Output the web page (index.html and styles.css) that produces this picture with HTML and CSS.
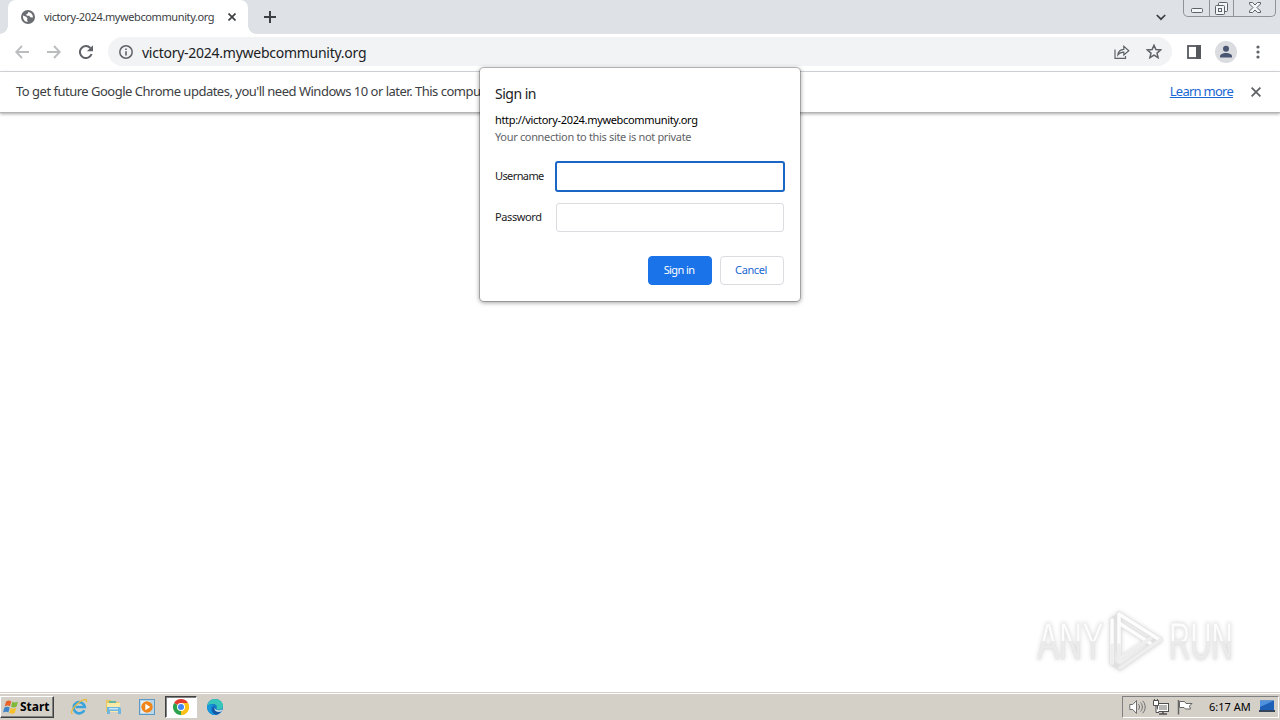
FILE: index.html
```html
<!DOCTYPE html>
<html lang="en">
<head>
    <meta charset="UTF-8">
    <title>victory-2024.mywebcommunity.org</title>
    <link rel="stylesheet" href="styles.css">
</head>
<body>
    <div class="tab-strip">
        <div class="tab">
            <svg class="globe" width="14" height="14" viewBox="0 0 14 14"><circle cx="7" cy="7" r="7" fill="#6a6d71"/><path d="M2 5.6l3.2 1.2 1.4 1.6-.6 1.2.8 2.4C3.800 12 1.700 9.500 2 5.600zM7.300 1.900l-.5 1.700-1.600.7.600 1.500 2.600-.1.800 1.600 2.700.2c.400-2.600-1.700-5.200-4.600-5.600z" fill="#fff"/></svg>
            <span class="tab-title">victory-2024.mywebcommunity.org</span>
            <svg class="tab-close" width="8" height="8" viewBox="0 0 8 8"><path d="M.5.5l7 7M7.500.5l-7 7" stroke="#3c4043" stroke-width="1.700"/></svg>
        </div>
        <svg class="new-tab" width="12" height="12" viewBox="0 0 12 12"><path d="M6 0v12M0 6h12" stroke="#3c4043" stroke-width="2"/></svg>
        <svg class="tab-search" width="10" height="7" viewBox="0 0 10 7"><path d="M.8 1L5 5.200 9.200 1" fill="none" stroke="#3c4043" stroke-width="1.700"/></svg>
        <div class="window-buttons">
            <span class="win-min"><svg width="12" height="5" viewBox="0 0 12 5"><rect x=".5" y=".5" width="11" height="4" rx="1" fill="#f4f5f7" stroke="#5d6168"/></svg></span>
            <span class="win-max"><svg width="13" height="13" viewBox="0 0 13 13" fill="#f4f5f7" stroke="#5d6168"><rect x="3.500" y=".5" width="9" height="9" rx="1"/><rect x=".5" y="3.500" width="9" height="9" rx="1"/><rect x="3.500" y="6.500" width="3" height="3"/></svg></span>
            <span class="win-close"><svg width="12" height="11" viewBox="0 0 12 11"><path d="M.5.500h3L6 3 8.500.5h3v1.500L8 5.500l3.500 3.500v1.500h-3L6 8l-2.500 2.500h-3V9L4 5.500.5 2z" fill="#f4f5f7" stroke="#5d6168"/></svg></span>
        </div>
    </div>

    <div class="toolbar">
        <svg class="back" width="14" height="14" viewBox="0 0 14 14" fill="none" stroke="#babcbe" stroke-width="1.800"><path d="M14 7H1.500M7 1L1.200 7 7 13"/></svg>
        <svg class="forward" width="14" height="14" viewBox="0 0 14 14" fill="none" stroke="#babcbe" stroke-width="1.800"><path d="M0 7h12.500M7 1l5.800 6L7 13"/></svg>
        <svg class="reload" width="14" height="14" viewBox="0 0 14 14"><path d="M12.600 9A6 6 0 1 1 11.400 3" fill="none" stroke="#5f6368" stroke-width="2"/><path d="M14 .2V6.300H7.900z" fill="#5f6368"/></svg>
        <div class="omnibox">
            <svg width="14" height="14" viewBox="0 0 14 14"><circle cx="7" cy="7" r="6.200" fill="none" stroke="#5f6368" stroke-width="1.500"/><path d="M7 6.200v4.300M7 3.500V5" stroke="#5f6368" stroke-width="1.600"/></svg>
            <span class="address">victory-2024.mywebcommunity.org</span>
            <svg class="share" width="16" height="14" viewBox="0 0 16 14" fill="none" stroke="#5f6368" stroke-width="1.200"><path d="M1 4.500v8.900h10.500V11"/><path d="M3.800 10c.4-3.700 2.200-5.400 6-5.600V1.300L14.800 5.700 9.800 10V7.200c-2.700 0-4.500.8-6 2.800z"/></svg>
            <svg class="star" width="16" height="15" viewBox="0 0 16 15"><path d="M8 1.300l1.900 4.300 4.700.4-3.600 3.100 1.100 4.600L8 11.200l-4.100 2.500L5 9.100 1.400 6l4.700-.4z" fill="none" stroke="#5f6368" stroke-width="1.500"/></svg>
        </div>
        <svg class="side-panel" width="14" height="14" viewBox="0 0 14 14"><rect x="1" y="1" width="12" height="12" fill="none" stroke="#55585d" stroke-width="1.800"/><path d="M9 0h5v14H9z" fill="#55585d"/></svg>
        <svg class="profile" width="22" height="22" viewBox="0 0 22 22"><circle cx="11" cy="11" r="11" fill="#dadce0"/><circle cx="11" cy="7.800" r="3" fill="#4a5572"/><path d="M5 16.500v-1.200c0-2 3-3.300 6-3.300s6 1.300 6 3.300v1.200z" fill="#4a5572"/></svg>
        <svg class="menu" width="4" height="14" viewBox="0 0 4 14" fill="#5f6368"><circle cx="2" cy="2" r="1.600"/><circle cx="2" cy="7" r="1.600"/><circle cx="2" cy="12" r="1.600"/></svg>
    </div>

    <div class="infobar">
        <span class="infobar-text">To get future Google Chrome updates, you'll need Windows 10 or later. This compu</span>
        <a class="learn-more" href="#">Learn more</a>
        <svg width="10" height="10" viewBox="0 0 10 10"><path d="M.6.6l8.800 8.800M9.400.6L.6 9.400" stroke="#5f6368" stroke-width="1.800"/></svg>
    </div>

    <div class="page">
        <div class="watermark">
            <span class="wm-any">ANY</span>
            <svg width="58" height="62" viewBox="0 0 58 62" fill="none" stroke-linejoin="round" stroke-linecap="round">
                <g stroke="#e0e0e0" stroke-width="5"><path d="M5 10v43M12 4v37M12 4l41 26M53 30L13 58M5 10l5-3M5 53l8 5M12 13l31 20"/></g>
                <g stroke="#fdfdfd" stroke-width="3.500"><path d="M5 10v43M12 4v37M12 4l41 26M12 13l31 20"/></g>
                <g stroke="#eee" stroke-width="3.500"><path d="M5 35v18M12 35v14l32-21M53 30L13 58"/></g>
            </svg>
            <span class="wm-run">RUN</span>
        </div>
    </div>

    <form class="dialog">
        <h1>Sign in</h1>
        <p class="origin">http://victory-2024.mywebcommunity.org</p>
        <p class="warning">Your connection to this site is not private</p>
        <div class="field">
            <label for="username">Username</label>
            <input class="focused" type="text" id="username">
        </div>
        <div class="field">
            <label class="pw" for="password">Password</label>
            <input type="password" id="password">
        </div>
        <div class="actions">
            <button type="button" class="primary">Sign in</button>
            <button type="button">Cancel</button>
        </div>
    </form>

    <div class="taskbar">
        <div class="start">
            <svg width="17" height="16" viewBox="0 0 17 16"><path d="M3 2.500c2-1.300 3.700-1.200 5.300-.2L7 7.300c-1.700-1-3.300-1-5.300.2z" fill="#e8622c"/><path d="M9.300 2.800c1.800 1 3.600 1 5.700-.2l-1.400 5c-2 1.200-3.800 1.200-5.600.2z" fill="#7fb83a"/><path d="M1.400 8.600c2-1.200 3.700-1.200 5.300-.2l-1.300 5c-1.700-1-3.400-1-5.400.2z" fill="#3f86c9"/><path d="M7.700 9c1.800 1 3.600 1 5.600-.2l-1.400 5c-2 1.200-3.800 1.200-5.600.2z" fill="#f6bf2b"/></svg>
            <span>Start</span>
        </div>
        <div class="launchers">
            <span class="launcher"><svg width="18" height="18" viewBox="0 0 18 18" fill="none"><path d="M14.300 12.200A5.600 5.600 0 1 1 14.800 9H5.500" stroke="#3ba3dc" stroke-width="2.600"/><path d="M2.500 16C-.5 15 4 8 9.500 4 14 .8 17.800.5 16.300 4.200" stroke="#e9b93c" stroke-width="1.300"/></svg></span>
            <span class="launcher"><svg width="17" height="17" viewBox="0 0 17 17"><path d="M1 2h5l1 2h7v10H1z" fill="#e7c65e"/><path d="M2 5h13v9H2z" fill="#f8e9a6"/><path d="M4 3h7v2H4z" fill="#66b7a0"/><path d="M2 9h13l1 2v5h-3v-3H5v3H2z" fill="#6cb6df"/><path d="M4 10h9v1.500H4z" fill="#c5e6f7"/></svg></span>
            <span class="launcher"><svg width="16" height="16" viewBox="0 0 16 16"><rect x=".5" y=".5" width="15" height="15" fill="#b9d5ea" stroke="#5e98c4"/><path d="M2 2h9v12H2z" fill="#e4f0f8"/><circle cx="8" cy="8" r="5.700" fill="#f08519"/><path d="M6.300 4.800v6.400L11.300 8z" fill="#fff"/></svg></span>
            <span class="launcher active"><svg width="16" height="16" viewBox="0 0 16 16"><path d="M8 8L1.070 4A8 8 0 0 1 14.930 4z" fill="#e33b2e"/><path d="M8 8l6.930-4A8 8 0 0 1 8 16z" fill="#fbc116"/><path d="M8 8v8A8 8 0 0 1 1.070 4z" fill="#2ba24c"/><path d="M8 4h6.930A8 8 0 0 1 8 16l3.500-6z" fill="#fbc116"/><circle cx="8" cy="8" r="4" fill="#fff"/><circle cx="8" cy="8" r="3" fill="#4285f4"/></svg></span>
            <span class="launcher"><svg width="16" height="16" viewBox="0 0 16 16"><circle cx="8" cy="8" r="8" fill="#1479c9"/><path d="M.2 7C1 2.800 4.200 0 8 0c4.500 0 8 3.200 8 6.700 0 2.700-2 4.100-4.200 4.100-1.900 0-2.700-.9-2.100-1.900C10.400 6.600 8.600 5 6 5 3.500 5 1.200 5.700.2 7z" fill="#37c6ba"/><path d="M4 9.500c0 3 2.500 5.700 5.600 6.300A8 8 0 0 1 .1 7C2 5 5.500 5 7 6.200 5 6.500 4 7.800 4 9.500z" fill="#1598dc"/><path d="M8 8c-1.500 3.500 3 5 6.700 3.300-1 2-2.700 3.500-5 4.400C4 15 3.500 8 8 8z" fill="#1558a5"/><path d="M8 7.500c-1 1.800.5 3.500 3 3.700 1.700.1 3.300-.2 4-1 .300.700-.3 1.700-.9 2.300C10 14 6 11.500 8 7.500z" fill="#d4e4ea"/></svg></span>
        </div>
        <div class="tray">
            <svg class="tray-sound" width="17" height="16" viewBox="0 0 17 16" stroke="#6d6d6d"><path d="M.8 5.500h3L7.500 1.500v13l-3.700-4h-3z" fill="#fff"/><path d="M9.500 5.200c1.300 1.500 1.300 4 0 5.600M11.600 3.500c2.300 2.500 2.300 6.500 0 9M13.700 1.800c3.300 3.700 3.300 8.700 0 12.400" fill="none"/></svg>
            <svg class="tray-net" width="16" height="16" viewBox="0 0 16 16"><rect x="4.500" y="4.500" width="11" height="8" fill="#fff" stroke="#4f4f4f"/><path d="M6 6h8v5H6z" fill="#b5b5b3"/><path d="M6 15h8M10 12v3" stroke="#4f4f4f" stroke-width="1.500"/><path d="M.5 1.500h5v5h-5zM1.500 0v2M4.500 0v2M3 7v6.500h3" fill="#fff" stroke="#4f4f4f"/></svg>
            <svg class="tray-flag" width="16" height="16" viewBox="0 0 16 16"><path d="M1.500 1v14.500" stroke="#666" stroke-width="1.500"/><path d="M2.500 2.500h5l1.500 2h6L12.500 7l1 3H8.500L7 8.500H2.500z" fill="#fff" stroke="#666"/></svg>
            <span class="clock">6:17 AM</span>
            <svg class="show-desktop" width="16" height="13" viewBox="0 0 16 13"><path d="M1 .5h14v9.500H1z" fill="#1e5fb8"/><path d="M1 .5h14L1 7z" fill="#4f91dc"/><path d="M0 10h16v2H0z" fill="#34455c"/></svg>
        </div>
    </div>
</body>
</html>
```

FILE: styles.css
```css
* {
    box-sizing: border-box;
}
body {
    margin: 0;
    width: 1280px;
    height: 720px;
    overflow: hidden;
    display: flex;
    flex-direction: column;
    background: #fff;
    font-family: "Noto Sans", "DejaVu Sans", sans-serif;
    font-size: 11px;
    color: #202124;
}
svg {
    flex: none;
    display: block;
}
span, a, label, p, h1 {
    white-space: nowrap;
}

/* tabs */
.tab-strip {
    height: 34px;
    flex: none;
    display: flex;
    background: #dee1e6;
    padding-left: 8px;
}
.tab {
    width: 240px;
    height: 34px;
    display: flex;
    align-items: center;
    padding: 0 12px 0 13px;
    background: #fff;
    border-radius: 8px 8px 0 0;
    position: relative;
}
.tab::before,
.tab::after {
    content: "";
    position: absolute;
    bottom: 0;
    width: 8px;
    height: 8px;
}
.tab::before {
    left: -8px;
    background: radial-gradient(circle at 0 0, #dee1e6 7.5px, #fff 8px);
}
.tab::after {
    right: -8px;
    background: radial-gradient(circle at 100% 0, #dee1e6 7.5px, #fff 8px);
}
.tab-title {
    margin-left: 9px;
    padding-bottom: 1px;
    letter-spacing: -0.4px;
    color: #3c4043;
}
.tab-close {
    margin-left: auto;
}
.new-tab {
    margin: 11px 0 0 16px;
}
.tab-search {
    margin: 14px 17px 0 auto;
}
.window-buttons {
    display: flex;
    width: 93px;
    height: 17px;
    margin-right: 4px;
    border: 1px solid #8e9299;
    border-top: 0;
    border-radius: 0 0 5px 5px;
}
.window-buttons span {
    display: flex;
    justify-content: center;
    align-items: flex-end;
    padding-bottom: 2px;
}
.window-buttons .win-min {
    width: 25px;
    padding-bottom: 3px;
}
.window-buttons .win-max {
    width: 25px;
    padding-bottom: 1px;
    border-left: 1px solid #8e9299;
    border-right: 1px solid #8e9299;
}
.window-buttons .win-close {
    width: 41px;
    padding-bottom: 3px;
}

/* toolbar */
.toolbar {
    height: 38px;
    flex: none;
    display: flex;
    align-items: center;
    padding: 0 20px 2px 15px;
    border-bottom: 1px solid #dadce0;
}
.forward {
    margin-left: 18px;
}
.reload {
    margin-left: 18px;
}
.omnibox {
    width: 1064px;
    height: 29px;
    margin-left: 15px;
    padding: 0 10px 0 11px;
    display: flex;
    align-items: center;
    background: #f1f3f4;
    border-radius: 15px;
}
.address {
    margin-left: 9px;
    padding-top: 2px;
    font-size: 14px;
    letter-spacing: -0.26px;
}
.share {
    margin-left: auto;
}
.star {
    margin-left: 16px;
}
.side-panel {
    margin-left: 15px;
}
.profile {
    margin-left: 14px;
}
.menu {
    margin-left: auto;
}

/* infobar */
.infobar {
    height: 41px;
    flex: none;
    display: flex;
    align-items: center;
    padding: 0 19px 1px 16px;
    border-bottom: 1px solid #b4b4b4;
    box-shadow: 0 1px 3px rgba(0, 0, 0, 0.35);
    font-size: 13px;
    color: #3c4043;
    z-index: 1;
}
.infobar-text {
    padding-bottom: 1px;
    letter-spacing: -0.5px;
}
.learn-more {
    margin-left: auto;
    margin-right: 18px;
    padding-bottom: 1px;
    letter-spacing: -0.75px;
    color: #1967d2;
}

/* page */
.page {
    flex: 1;
    display: flex;
    justify-content: flex-end;
    align-items: flex-end;
    padding: 0 13px 20px 0;
}
.watermark {
    display: flex;
    align-items: center;
    font-family: "Liberation Sans", Arial, sans-serif;
    font-size: 46px;
    filter: drop-shadow(0 0 2px rgba(0, 0, 0, 0.16));
}
.watermark span {
    color: transparent;
    background: linear-gradient(#fdfdfd 50%, #ebebeb 50%);
    -webkit-background-clip: text;
    background-clip: text;
    -webkit-text-stroke: 0.5px #e4e4e4;
}
.wm-any {
    width: 92px;
    transform: scale(0.7, 1.12);
    transform-origin: right;
}
.wm-run {
    width: 98px;
    transform: scale(0.64, 1.12);
    transform-origin: left;
}
.watermark svg {
    margin: 0 4px 0 5px;
}

/* sign in dialog */
.dialog {
    position: absolute;
    left: 480px;
    top: 68px;
    width: 320px;
    height: 233px;
    padding: 16px 15px;
    background: #fff;
    border-radius: 4px;
    box-shadow: 0 0 0 1px rgba(0, 0, 0, 0.2), 0 1px 4px 1px rgba(0, 0, 0, 0.35);
    z-index: 2;
}
.dialog h1 {
    margin: 0;
    font-size: 14px;
    font-weight: normal;
    line-height: 20px;
    letter-spacing: -0.5px;
}
.dialog p {
    margin: 0;
    line-height: 17px;
    letter-spacing: -0.33px;
}
.dialog .origin {
    margin-top: 7px;
    color: #000;
}
.dialog .warning {
    color: #5f6368;
}
.field {
    display: flex;
    align-items: center;
    height: 31px;
    margin-top: 16px;
}
.field + .field {
    margin-top: 10px;
}
.field label {
    width: 61px;
    padding-bottom: 2px;
    letter-spacing: -0.6px;
}
.field .pw {
    letter-spacing: -0.4px;
}
.field input {
    width: 228px;
    height: 29px;
    border: 1px solid #dadce0;
    border-radius: 3px;
    outline: none;
}
.field input.focused {
    width: 230px;
    height: 31px;
    margin-left: -1px;
    border: 2px solid #1a66c4;
}
.actions {
    display: flex;
    justify-content: flex-end;
    gap: 8px;
    margin-top: 23px;
    padding-right: 1px;
}
.actions button {
    width: 64px;
    height: 29px;
    padding: 0 2px 2px 0;
    border: 1px solid #dadce0;
    border-radius: 4px;
    background: #fff;
    color: #1967d2;
    font-family: inherit;
    font-size: 11px;
    letter-spacing: -0.4px;
}
.actions .primary {
    background: #1a73e8;
    border-color: #1a73e8;
    color: #fff;
    letter-spacing: -0.6px;
}

/* taskbar */
.taskbar {
    height: 28px;
    flex: none;
    display: flex;
    align-items: center;
    background: #d4d0c8;
    border-top: 1px solid #d4d0c8;
    box-shadow: inset 0 1px 0 #fff;
}
.start {
    width: 54px;
    height: 22px;
    display: flex;
    align-items: center;
    padding-left: 2px;
    border: 1px solid;
    border-color: #fff #404040 #404040 #fff;
    box-shadow: inset -1px -1px 0 #808080;
    font-size: 12px;
    font-weight: bold;
    color: #000;
}
.launchers {
    display: flex;
    margin-left: 9px;
    gap: 2px;
}
.launcher {
    width: 32px;
    height: 22px;
    display: flex;
    align-items: center;
    justify-content: center;
}
.launcher.active {
    background: #fff;
    border: 1px solid;
    border-color: #404040 #fff #fff #404040;
    box-shadow: inset 1px 1px 0 #808080;
}
.tray {
    width: 157px;
    height: 22px;
    margin: 0 1px 0 auto;
    padding: 0 3px 0 6px;
    display: flex;
    align-items: center;
    border: 1px solid;
    border-color: #808080 #fff #fff #808080;
    color: #000;
}
.tray-net {
    margin-left: 7px;
}
.tray-flag {
    margin-left: 8px;
}
.clock {
    margin-left: 16px;
}
.show-desktop {
    margin-left: auto;
}
```
